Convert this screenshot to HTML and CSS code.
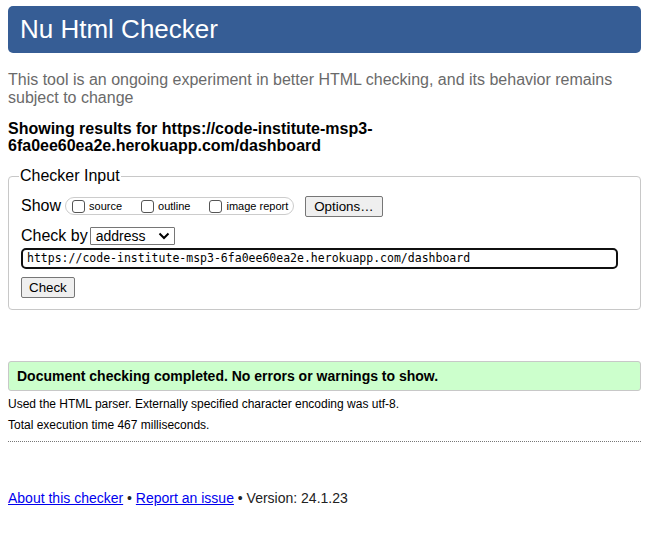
FILE: index.html
```html
<!DOCTYPE html>
<html>
<head>
<meta charset="utf-8">
<title>Nu Html Checker</title>
<link rel="stylesheet" href="styles.css">
</head>
<body>
<h1 class="title">Nu Html Checker</h1>
<p class="intro">This tool is an ongoing experiment in better HTML checking, and its behavior remains subject to change</p>
<p class="showing">Showing results for https://code-institute-msp3-6fa0ee60ea2e.herokuapp.com/dashboard</p>
<fieldset class="input-box">
  <legend>Checker Input</legend>
  <div class="row">
    <span class="lbl">Show</span>
    <span class="pill">
      <label class="opt"><span class="cb"></span>source</label>
      <label class="opt"><span class="cb"></span>outline</label>
      <label class="opt"><span class="cb"></span>image report</label>
    </span>
    <button class="btn btn-options">Options…</button>
  </div>
  <div class="row row-by">
    <span class="lbl lbl-by">Check by</span>
    <span class="select">address<svg width="12" height="8" viewBox="0 0 12 8"><path d="M1.5 1.5 L6 6 L10.5 1.5" fill="none" stroke="#000" stroke-width="2"/></svg></span>
  </div>
  <div class="url">https://code-institute-msp3-6fa0ee60ea2e.herokuapp.com/dashboard</div>
  <button class="btn btn-check">Check</button>
</fieldset>
<div class="success">Document checking completed. No errors or warnings to show.</div>
<p class="small">Used the HTML parser. Externally specified character encoding was utf-8.</p>
<p class="small">Total execution time 467 milliseconds.</p>
<hr class="dots">
<p class="footer"><a href="#">About this checker</a> • <a href="#">Report an issue</a> • Version: 24.1.23</p>
</body>
</html>
```
FILE: styles.css
```css
html, body { margin: 0; padding: 0; background: #fff; }
body {
  font-family: "Liberation Sans", Arial, sans-serif;
  color: #000;
  padding: 6px 9px 0 8px;
}
.title {
  margin: 0;
  background: #365d95;
  color: #fff;
  font-weight: normal;
  font-size: 26px;
  line-height: 47px;
  height: 47px;
  padding: 0 12px;
  border-radius: 5px;
}
.intro {
  color: #6a6a6a;
  font-size: 16px;
  line-height: 18px;
  margin: 18px 0 0;
}
.showing {
  font-weight: bold;
  font-size: 16px;
  line-height: 17px;
  margin: 13px 0 0;
}
.input-box {
  margin: 13px 0 0;
  border: 1px solid #c8c8c8;
  border-radius: 4px;
  padding: 0 12px 11px;
}
.input-box legend {
  font-size: 16px;
  padding: 0 1px;
  margin-left: -2px;
}
.row {
  display: flex;
  align-items: center;
  height: 22px;
  margin-top: 10px;
}
.lbl { font-size: 16px; margin-right: 4px; }
.lbl-by { margin-right: 2px; }
.pill {
  display: flex;
  align-items: center;
  border: 1px solid #ccc;
  border-radius: 9px;
  height: 16px;
  padding: 0 5px 0 6px;
  font-size: 11px;
}
.opt { display: flex; align-items: center; margin-right: 19px; }
.opt:last-child { margin-right: 0; }
.cb {
  display: inline-block;
  width: 11px; height: 11px;
  border: 1px solid #555;
  border-radius: 3px;
  margin: 0 4px 0 0;
}
.btn {
  font-family: "Liberation Sans", Arial, sans-serif;
  background: #efefef;
  border: 1px solid #767676;
  border-radius: 2px;
  color: #000;
  font-size: 13.33px;
  padding: 0 7px;
  height: 21px;
}
.btn-options { margin-left: 11px; padding: 0 8px; }
.row-by { margin-top: 10px; height: 18px; }
.select {
  display: flex;
  align-items: center;
  justify-content: space-between;
  width: 74px;
  height: 16px;
  border: 1px solid #767676;
  border-radius: 1px;
  padding: 0 4px 0 5px;
  font-size: 14px;
}
.url {
  margin-top: 3px;
  border: 2px solid #101010;
  border-radius: 5px;
  height: 17px;
  line-height: 17px;
  font-family: "DejaVu Sans Mono", "Liberation Mono", monospace;
  font-size: 11.5px;
  padding: 0 4px;
  margin-right: 10px;
}
.btn-check { margin-top: 8px; display: block; }
.success {
  margin-top: 51px;
  background: #ccffcc;
  border: 1px solid #c8c8c8;
  border-radius: 3px;
  font-weight: bold;
  font-size: 14px;
  line-height: 28px;
  padding: 0 8px;
}
.small { font-size: 12px; margin: 6px 0 0; line-height: 14px; }
.small + .small { margin-top: 7px; }
.dots {
  border: 0;
  border-top: 1px dotted #777;
  margin: 9px 0 0;
}
.footer { font-size: 14px; margin: 48px 0 0; line-height: 16px; color: #222; }
.footer a { color: #0000ee; }
```
